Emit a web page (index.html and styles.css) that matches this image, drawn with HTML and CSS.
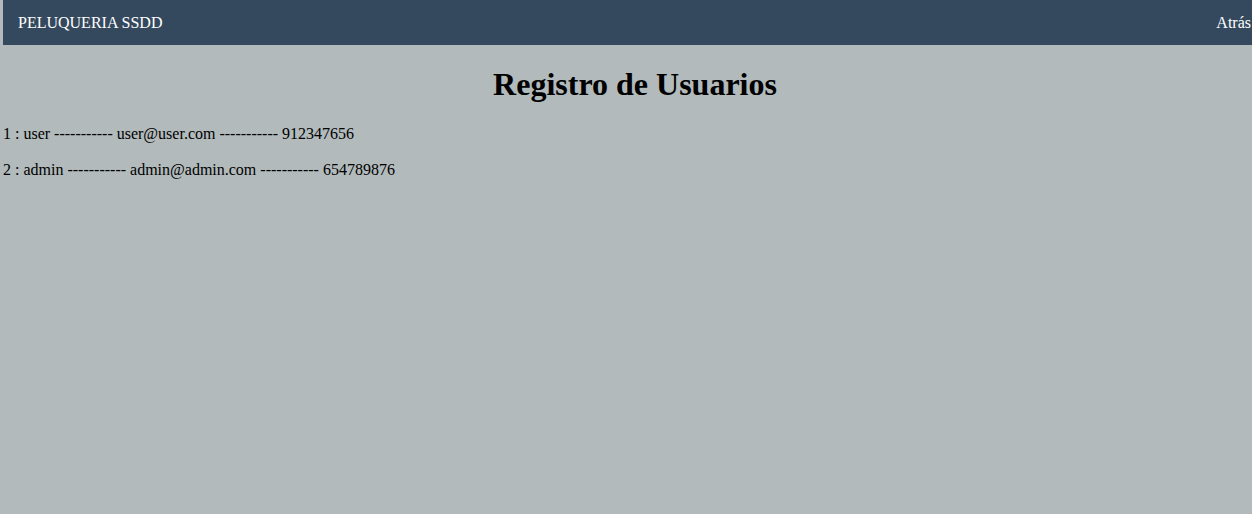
FILE: index.html
```html
<!DOCTYPE html>
<html lang="es">
<head>
<meta charset="utf-8">
<title>Registro de Usuarios</title>
<link rel="stylesheet" href="styles.css">
</head>
<body>
<nav class="navbar">
  <span class="brand">PELUQUERIA SSDD</span>
  <a class="back" href="#">Atrás</a>
</nav>
<main class="content">
  <h1 class="title">Registro de Usuarios</h1>
  <p class="row">1 : user ----------- user@user.com ----------- 912347656</p>
  <p class="row">2 : admin ----------- admin@admin.com ----------- 654789876</p>
</main>
</body>
</html>
```
FILE: styles.css
```css
html, body {
  margin: 0;
  padding: 0;
}
body {
  background: #b2babb;
  font-family: "Liberation Serif", "Times New Roman", serif;
  font-size: 16px;
  color: #000;
  padding-left: 3px;
  overflow: hidden;
}
.navbar {
  display: flex;
  justify-content: space-between;
  align-items: center;
  background: #34495e;
  height: 45px;
  padding: 0 1px 0 15px;
  box-sizing: border-box;
}
.brand {
  color: #fff;
}
.back {
  color: #fff;
  text-decoration: none;
}
.content {
  display: flex;
  flex-direction: column;
}
.title {
  font-size: 32px;
  font-weight: bold;
  text-align: center;
  margin: 21px 0 22px;
  padding-left: 15px;
}
.row {
  margin: 0 0 18px;
}
```
